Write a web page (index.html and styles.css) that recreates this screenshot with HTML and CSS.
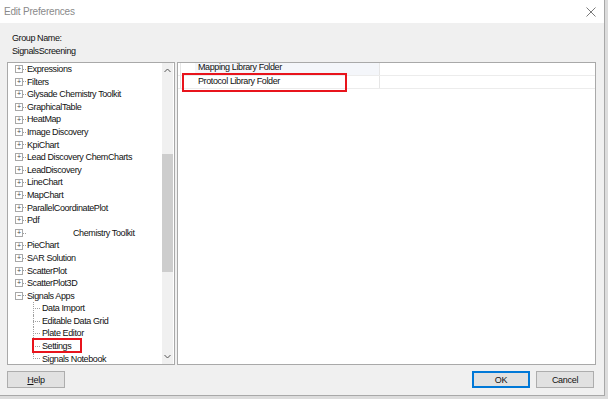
FILE: index.html
```html
<!DOCTYPE html>
<html>
  <head>
    <title>Edit Preferences</title>
    <meta charset="UTF-8" />
    <link rel="stylesheet" href="styles.css">
  </head>
  <body>
    <div class="dialog">

      <!-- title bar -->
      <div class="titlebar">
        <span class="title">Edit Preferences</span>
        <svg class="close" width="10" height="10" viewBox="0 0 10 10">
          <path d="M0.5 0.5 L9.5 9.5 M9.5 0.5 L0.5 9.5" stroke="#7a7a7a" stroke-width="1" fill="none"/>
        </svg>
      </div>

      <div class="body">
        <div class="group">
          <div>Group Name:</div>
          <div>SignalsScreening</div>
        </div>

        <div class="panes">
          <!-- tree -->
          <div class="treepane">
            <ul class="tree">
              <li class="node"><span class="box">+</span><span class="tick"></span>Expressions</li>
              <li class="node"><span class="box">+</span><span class="tick"></span>Filters</li>
              <li class="node"><span class="box">+</span><span class="tick"></span>Glysade Chemistry Toolkit</li>
              <li class="node"><span class="box">+</span><span class="tick"></span>GraphicalTable</li>
              <li class="node"><span class="box">+</span><span class="tick"></span>HeatMap</li>
              <li class="node"><span class="box">+</span><span class="tick"></span>Image Discovery</li>
              <li class="node"><span class="box">+</span><span class="tick"></span>KpiChart</li>
              <li class="node"><span class="box">+</span><span class="tick"></span>Lead Discovery ChemCharts</li>
              <li class="node"><span class="box">+</span><span class="tick"></span>LeadDiscovery</li>
              <li class="node"><span class="box">+</span><span class="tick"></span>LineChart</li>
              <li class="node"><span class="box">+</span><span class="tick"></span>MapChart</li>
              <li class="node"><span class="box">+</span><span class="tick"></span>ParallelCoordinatePlot</li>
              <li class="node"><span class="box">+</span><span class="tick"></span>Pdf</li>
              <li class="node"><span class="box">+</span><span class="tick"></span><span class="blank"></span>Chemistry Toolkit</li>
              <li class="node"><span class="box">+</span><span class="tick"></span>PieChart</li>
              <li class="node"><span class="box">+</span><span class="tick"></span>SAR Solution</li>
              <li class="node"><span class="box">+</span><span class="tick"></span>ScatterPlot</li>
              <li class="node"><span class="box">+</span><span class="tick"></span>ScatterPlot3D</li>
              <li class="node"><span class="box">&minus;</span><span class="tick"></span>Signals Apps</li>
              <li class="child"><span class="ctick"></span>Data Import</li>
              <li class="child"><span class="ctick"></span>Editable Data Grid</li>
              <li class="child"><span class="ctick"></span>Plate Editor</li>
              <li class="child"><span class="ctick"></span>Settings</li>
              <li class="child last"><span class="ctick"></span>Signals Notebook</li>
            </ul>
            <div class="mark settings-mark"></div>

            <div class="scrollbar">
              <svg class="arrow" width="7" height="5" viewBox="0 0 7 5"><path d="M0.5 4 L3.5 1 L6.5 4" stroke="#555" fill="none"/></svg>
              <div class="track"><div class="thumb"></div></div>
              <svg class="arrow" width="7" height="5" viewBox="0 0 7 5"><path d="M0.5 1 L3.5 4 L6.5 1" stroke="#555" fill="none"/></svg>
            </div>
          </div>

          <!-- settings grid -->
          <div class="gridpane">
            <div class="row first">
              <span class="hdr"></span><span class="name">Mapping Library Folder</span><span class="value"></span>
            </div>
            <div class="row">
              <span class="hdr"></span><span class="name">Protocol Library Folder</span><span class="value"></span>
            </div>
            <div class="mark protocol-mark"></div>
          </div>
        </div>

        <div class="footer">
          <button class="btn"><u>H</u>elp</button>
          <div class="spacer"></div>
          <button class="btn default">OK</button>
          <button class="btn">Cancel</button>
        </div>
      </div>
    </div>
  </body>
</html>
```
FILE: styles.css
```css
html, body {
  margin: 0;
  padding: 0;
}
body {
  background-color: #dcdcdc;
  font-family: "Liberation Sans", Arial, sans-serif;
  font-size: 9px;
  letter-spacing: -0.4px;
  color: #111;
}

.dialog {
  width: 604px;
  height: 395px;
  background-color: #f0f0f0;
  border-right: 1px solid #a8a8a8;
  border-bottom: 1px solid #a8a8a8;
  display: flex;
  flex-direction: column;
}

/* title bar */
.titlebar {
  height: 23px;
  background-color: #fff;
  display: flex;
  align-items: center;
  padding: 0 8px 0 4px;
}
.title {
  flex: 1;
  font-size: 10px;
  letter-spacing: -0.2px;
  color: #8a8a8a;
}

.body {
  flex: 1;
  display: flex;
  flex-direction: column;
  padding: 9px 8px 0 7px;
}

.group {
  padding-left: 5px;
  line-height: 12.5px;
  height: 30px;
}

.panes {
  display: flex;
  gap: 2px;
  height: 303px;
}

/* tree */
.treepane {
  position: relative;
  width: 166px;
  border: 1px solid #a9a9a9;
  background-color: #fff;
  display: flex;
}
.tree {
  list-style: none;
  margin: 0;
  padding: 0 0 0 7px;
  flex: 1;
}
.tree li {
  height: 12.6px;
  line-height: 12.6px;
  display: flex;
  align-items: center;
  white-space: nowrap;
  position: relative;
}
.box {
  width: 6px;
  height: 6px;
  border: 1px solid #a8a8a8;
  font-size: 7px;
  letter-spacing: 0;
  line-height: 6px;
  text-align: center;
  color: #444;
  box-sizing: content-box;
}
.tick {
  width: 3px;
  margin-right: 1px;
  border-top: 1px dotted #a0a0a0;
}
.blank {
  display: inline-block;
  width: 46px;
}
.child {
  padding-left: 18px;
}
.child::before {
  content: "";
  position: absolute;
  left: 18px;
  top: 0;
  bottom: 0;
  border-left: 1px dotted #a0a0a0;
}
.child.last::before {
  bottom: 6px;
}
.ctick {
  width: 7px;
  margin-right: 2px;
  border-top: 1px dotted #a0a0a0;
}

.scrollbar {
  width: 11px;
  margin-right: 1px;
  background-color: #f0f0f0;
  display: flex;
  flex-direction: column;
  align-items: center;
}
.arrow {
  margin: 5px 0;
}
.track {
  flex: 1;
  width: 11px;
  padding-top: 76px;
}
.thumb {
  height: 118px;
  background-color: #cdcdcd;
}

/* grid */
.gridpane {
  position: relative;
  flex: 1;
  border: 1px solid #a9a9a9;
  background-color: #fff;
}
.row {
  display: flex;
  height: 12px;
  line-height: 11px;
  border-bottom: 1px solid #ececec;
}
.row.first {
  line-height: 9px;
  overflow: hidden;
}
.hdr {
  width: 14px;
  margin-left: 2px;
  border-left: 1px solid #e6e6e6;
}
.name {
  width: 181px;
  padding-left: 3px;
}
.row.first .name {
  background-color: #f4f6fa;
}
.value {
  flex: 1;
  border-left: 1px solid #e6e6e6;
}

/* red annotation boxes */
.mark {
  position: absolute;
  border: 2px solid #e8141c;
}
.settings-mark {
  left: 24px;
  top: 275px;
  width: 46px;
  height: 11px;
}
.protocol-mark {
  left: 4px;
  top: 10px;
  width: 161px;
  height: 15px;
}

/* buttons */
.footer {
  display: flex;
  gap: 6px;
  padding-top: 6px;
  padding-right: 2px;
}
.spacer {
  flex: 1;
}
.btn {
  width: 58px;
  height: 17px;
  background-color: #e1e1e1;
  border: 1px solid #adadad;
  font-family: "Liberation Sans", Arial, sans-serif;
  font-size: 9px;
  letter-spacing: -0.3px;
  color: #111;
  padding: 0;
}
.btn.default {
  border: 2px solid #0078d7;
}
```
